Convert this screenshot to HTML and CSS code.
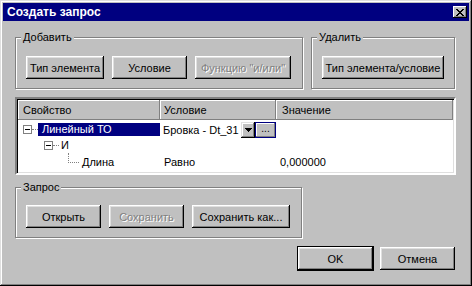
FILE: index.html
```html
<!DOCTYPE html>
<html lang="ru">
<head>
    <meta charset="UTF-8">
    <title>Создать запрос</title>
    <link rel="stylesheet" href="styles.css">
</head>
<body>
    <div class="window">
        <div class="titlebar">
            <span class="title">Создать запрос</span>
            <button class="close-btn" title="Закрыть">
                <svg width="8" height="7" viewBox="0 0 8 7" shape-rendering="crispEdges">
                    <path d="M0 0h2v1H0zM6 0h2v1H6zM1 1h2v1H1zM5 1h2v1H5zM2 2h4v1H2zM3 3h2v1H3zM2 4h4v1H2zM1 5h2v1H1zM5 5h2v1H5zM0 6h2v1H0zM6 6h2v1H6z" fill="#000"/>
                </svg>
            </button>
        </div>

        <div class="dialog">
            <div class="group-row">
                <div class="group group-add">
                    <span class="legend">Добавить</span>
                    <div class="btn-row">
                        <button class="btn btn-type">Тип элемента</button>
                        <button class="btn btn-cond">Условие</button>
                        <button class="btn btn-func" disabled>Функцию "и/или"</button>
                    </div>
                </div>
                <div class="group group-del">
                    <span class="legend">Удалить</span>
                    <div class="btn-row">
                        <button class="btn btn-del">Тип элемента/условие</button>
                    </div>
                </div>
            </div>

            <div class="grid-box">
                <div class="grid-line grid-head">
                    <div class="hcell">Свойство</div>
                    <div class="hcell">Условие</div>
                    <div class="hcell">Значение</div>
                </div>

                <div class="grid-line row-1">
                    <div class="cell tree-cell">
                        <span class="tree-box"></span>
                        <span class="tree-dots"></span>
                        <span class="tree-label selected">Линейный ТО</span>
                    </div>
                    <div class="cell combo-cell">
                        <span class="combo-text">Бровка - Dt_31</span>
                        <span class="combo-arrow">
                            <svg width="7" height="4" viewBox="0 0 7 4" shape-rendering="crispEdges">
                                <path d="M0 0h7v1H0zM1 1h5v1H1zM2 2h3v1H2zM3 3h1v1H3z" fill="#000"/>
                            </svg>
                        </span>
                        <span class="ellipsis-frame"><span class="ellipsis-btn">...</span></span>
                    </div>
                    <div class="cell"></div>
                </div>

                <div class="grid-line row-2">
                    <div class="cell tree-cell level-2">
                        <span class="tree-box"></span>
                        <span class="tree-dots"></span>
                        <span class="tree-label">И</span>
                    </div>
                    <div class="cell"></div>
                    <div class="cell"></div>
                </div>

                <div class="grid-line row-3">
                    <div class="cell tree-cell level-3">
                        <span class="tree-elbow"></span>
                        <span class="tree-label">Длина</span>
                    </div>
                    <div class="cell text-cell">Равно</div>
                    <div class="cell text-cell">0,000000</div>
                </div>
            </div>

            <div class="group group-query">
                <span class="legend">Запрос</span>
                <div class="btn-row">
                    <button class="btn btn-open">Открыть</button>
                    <button class="btn btn-save" disabled>Сохранить</button>
                    <button class="btn btn-saveas">Сохранить как...</button>
                </div>
            </div>

            <div class="footer">
                <button class="btn btn-ok default">OK</button>
                <button class="btn btn-cancel">Отмена</button>
            </div>
        </div>
    </div>
</body>
</html>
```

FILE: styles.css
```css
body {
    margin: 0;
    font-family: "Liberation Sans", Arial, sans-serif;
    font-size: 11px;
    color: #000;
    background: #c0c0c0;
}
.window {
    width: 472px;
    height: 286px;
    box-sizing: border-box;
    padding: 3px;
    background: #c0c0c0;
    box-shadow: inset -1px -1px #000, inset 1px 1px #dfdfdf,
                inset -2px -2px #808080, inset 2px 2px #fff;
}
.titlebar {
    height: 18px;
    background: #000080;
    color: #fff;
    display: flex;
    align-items: center;
    justify-content: space-between;
    padding: 0 2px 0 4px;
}
.title {
    font-weight: bold;
    font-size: 12px;
}
.close-btn {
    width: 14px;
    height: 12px;
    padding: 0;
    border: 0;
    background: #c0c0c0;
    display: flex;
    align-items: center;
    justify-content: center;
    box-shadow: inset -1px -1px #000, inset 1px 1px #fff, inset -2px -2px #808080;
}

.dialog {
    padding: 16px 13px 0 12px;
}

/* group boxes */
.group-row {
    display: flex;
    justify-content: space-between;
    width: 440px;
}
.group {
    border: 1px solid #808080;
    box-shadow: inset 1px 1px #fff, 1px 1px #fff;
    padding: 0 10px 9px 10px;
}
.legend {
    display: block;
    width: max-content;
    height: 13px;
    line-height: 13px;
    margin: -7px 0 0 -5px;
    padding: 0 2px;
    background: #c0c0c0;
}
.btn-row {
    display: flex;
    gap: 8px;
    margin-top: 12px;
}
.group-add { width: 266px; }
.group-del { width: 122px; }
.group-query {
    width: 265px;
    margin-top: 12px;
}
.group-query .btn-row { margin-top: 11px; }

/* buttons */
.btn {
    font: inherit;
    color: #000;
    height: 23px;
    padding: 0;
    border: 0;
    background: #c0c0c0;
    box-shadow: inset -1px -1px #000, inset 1px 1px #fff,
                inset -2px -2px #808080, inset 2px 2px #dfdfdf;
}
.btn:disabled {
    color: #808080;
    text-shadow: 1px 1px #fff;
}
.btn-type { width: 78px; }
.btn-cond { width: 75px; }
.btn-func { width: 96px; }
.btn-del { width: 124px; }
.btn-open { width: 75px; }
.btn-save { width: 75px; }
.btn-saveas { width: 98px; }
.btn-ok { width: 77px; height: 25px; }
.btn-cancel { width: 75px; }
.btn.default {
    box-shadow: inset 0 0 0 1px #000, inset -2px -2px #000, inset 2px 2px #fff,
                inset -3px -3px #808080, inset 3px 3px #dfdfdf;
}

/* property grid */
.grid-box {
    margin-top: 8px;
    width: 441px;
    height: 78px;
    box-sizing: border-box;
    background: #fff;
    border: 2px solid;
    border-color: #808080 #fff #fff #808080;
    box-shadow: inset 1px 1px #000, inset -1px -1px #dfdfdf;
    padding: 1px 1px 0 1px;
}
.grid-line {
    display: grid;
    grid-template-columns: 142px 116px 1fr;
}
.grid-head { height: 20px; }
.hcell {
    background: #c0c0c0;
    line-height: 20px;
    padding-left: 5px;
    box-shadow: inset -1px -1px #808080, inset 1px 1px #fff;
}
.hcell + .hcell { padding-left: 4px; }
.hcell:last-child { padding-left: 6px; }

.row-1 { height: 18px; }
.row-2 { height: 14px; }
.row-3 { height: 20px; }
.cell {
    display: flex;
    align-items: center;
    white-space: nowrap;
}
.text-cell { padding-left: 4px; }

.tree-cell { padding-left: 5px; }
.tree-cell.level-2 { padding-left: 26px; }
.tree-cell.level-3 { padding-left: 50px; }
.tree-box {
    width: 9px;
    height: 9px;
    box-sizing: border-box;
    border: 1px solid #808080;
    background: #fff;
    display: flex;
    align-items: center;
    justify-content: center;
    flex: none;
}
.tree-box::after {
    content: "";
    width: 5px;
    height: 1px;
    background: #000;
}
.tree-dots {
    width: 6px;
    border-top: 1px dotted #808080;
    flex: none;
}
.tree-label {
    line-height: 13px;
    height: 13px;
    padding: 0 3px 0 2px;
}
.tree-label.selected {
    flex: 1;
    background: #000080;
    color: #fff;
    padding-left: 4px;
}
.tree-elbow {
    align-self: flex-start;
    margin-top: 1px;
    width: 10px;
    height: 9px;
    border-left: 1px dotted #808080;
    border-bottom: 1px dotted #808080;
    flex: none;
}
.level-3 .tree-label { padding-left: 3px; }

.combo-cell {
    align-items: flex-start;
    padding-top: 2px;
}
.combo-text {
    width: 81px;
    height: 16px;
    line-height: 16px;
    padding-left: 3px;
    box-sizing: border-box;
    overflow: hidden;
}
.combo-arrow {
    width: 14px;
    height: 16px;
    background: #c0c0c0;
    display: flex;
    align-items: center;
    justify-content: center;
    box-shadow: inset -1px -1px #000, inset 1px 1px #dfdfdf,
                inset -2px -2px #808080, inset 2px 2px #fff;
}
.ellipsis-frame {
    width: 21px;
    height: 16px;
    box-sizing: border-box;
    border: 1px solid #000080;
    display: flex;
}
.ellipsis-btn {
    flex: 1;
    background: #c0c0c0;
    font-size: 10px;
    line-height: 12px;
    text-align: center;
    box-shadow: inset -1px -1px #808080, inset 1px 1px #fff;
}

.footer {
    display: flex;
    justify-content: flex-end;
    align-items: center;
    gap: 6px;
    margin-top: 8px;
    width: 440px;
}
```
